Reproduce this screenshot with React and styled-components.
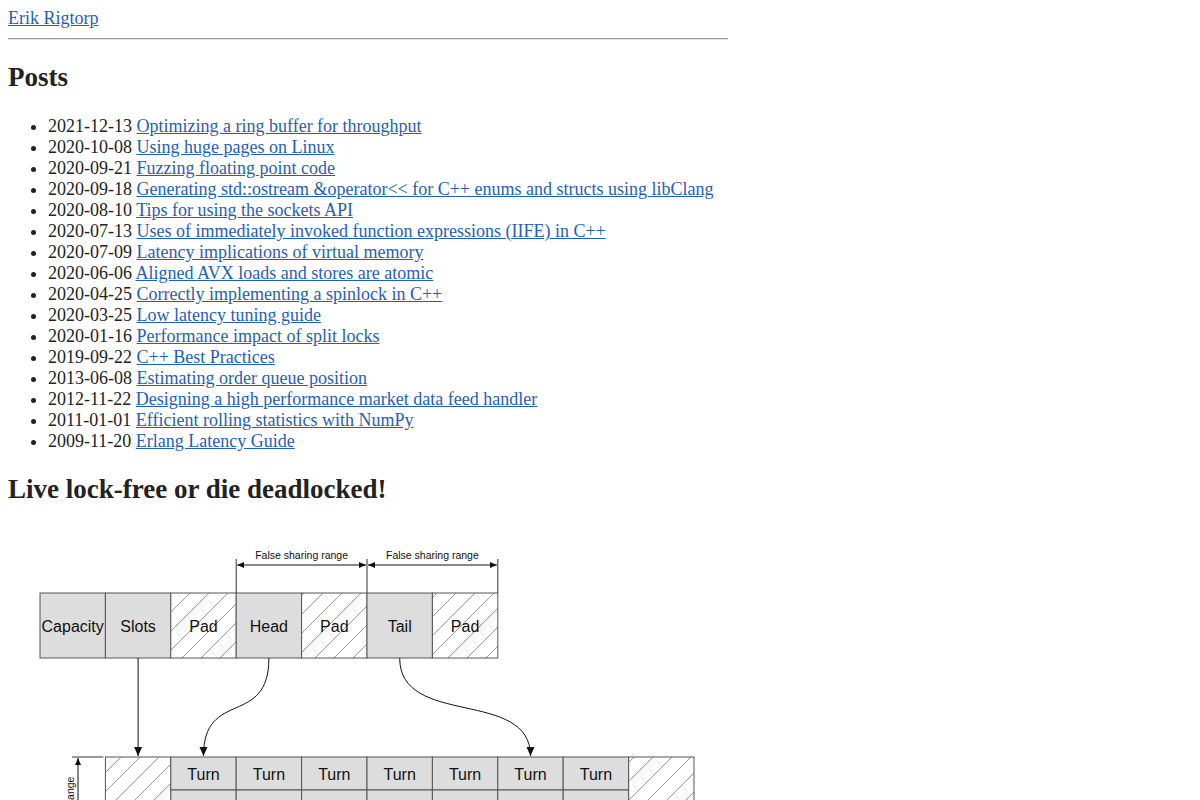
import React from 'react';
import styled, { createGlobalStyle } from 'styled-components';

const GlobalStyle = createGlobalStyle`
  body {
    margin: 8px;
    font-family: "Liberation Serif", "Times New Roman", serif;
    font-size: 18px;
    line-height: 21px;
    color: #222;
    background: #fff;
  }
`;

const Page = styled.div`
  max-width: 720px;
`;

const Link = styled.a`
  color: #1f5fb6;
  text-decoration: underline;
`;

const Rule = styled.hr`
  border: 0;
  border-top: 1px solid #999;
  border-bottom: 1px solid #e4e4e4;
  margin: 9px 0;
`;

const Heading = styled.h2`
  font-size: 27px;
  line-height: 31px;
  font-weight: bold;
  margin: 22.4px 0;
`;

const PostList = styled.ul`
  margin: 18px 0;
  padding-left: 40px;
`;

const Figure = styled.p`
  margin: 18px 0;
`;

const Diagram = styled.svg`
  display: block;
  font-family: "Liberation Sans", Arial, sans-serif;
`;

const posts = [
  ['2021-12-13', 'Optimizing a ring buffer for throughput'],
  ['2020-10-08', 'Using huge pages on Linux'],
  ['2020-09-21', 'Fuzzing floating point code'],
  ['2020-09-18', 'Generating std::ostream &operator<< for C++ enums and structs using libClang'],
  ['2020-08-10', 'Tips for using the sockets API'],
  ['2020-07-13', 'Uses of immediately invoked function expressions (IIFE) in C++'],
  ['2020-07-09', 'Latency implications of virtual memory'],
  ['2020-06-06', 'Aligned AVX loads and stores are atomic'],
  ['2020-04-25', 'Correctly implementing a spinlock in C++'],
  ['2020-03-25', 'Low latency tuning guide'],
  ['2020-01-16', 'Performance impact of split locks'],
  ['2019-09-22', 'C++ Best Practices'],
  ['2013-06-08', 'Estimating order queue position'],
  ['2012-11-22', 'Designing a high performance market data feed handler'],
  ['2011-01-01', 'Efficient rolling statistics with NumPy'],
  ['2009-11-20', 'Erlang Latency Guide'],
];

const W = 65.4;
const X0 = 32;
const cx = (i) => X0 + i * W;

const Cell = ({ i, y, h, label, hatch, size = 16 }) => (
  <g>
    <rect
      x={cx(i)}
      y={y}
      width={W}
      height={h}
      fill={hatch ? 'url(#hatch)' : '#dddddd'}
      stroke="#555"
      strokeWidth="1"
    />
    {label && (
      <text x={cx(i) + W / 2} y={y + h / 2 + size * 0.36 + 1} fontSize={size} textAnchor="middle" fill="#111">
        {label}
      </text>
    )}
  </g>
);

const QueueDiagram = () => {
  const top = ['Capacity', 'Slots', 'Pad', 'Head', 'Pad', 'Tail', 'Pad'];
  const hatched = [false, false, true, false, true, false, true];
  const by = 229;
  return (
    <Diagram width="720" height="420" viewBox="0 0 720 420">
      <defs>
        <pattern id="hatch" width="19" height="19" patternUnits="userSpaceOnUse">
          <rect width="19" height="19" fill="#fff" />
          <path d="M-2 21 L21 -2 M-2 2 L2 -2 M17 21 L21 17" stroke="#9a9a9a" strokeWidth="1" />
        </pattern>
        <marker id="arrow" markerWidth="10" markerHeight="10" refX="9" refY="5" orient="auto" markerUnits="userSpaceOnUse">
          <path d="M0 1 L9 5 L0 9 Z" fill="#111" />
        </marker>
        <marker id="dim" markerWidth="8" markerHeight="8" refX="7" refY="4" orient="auto-start-reverse" markerUnits="userSpaceOnUse">
          <path d="M0 1 L7 4 L0 7 Z" fill="#111" />
        </marker>
      </defs>

      {/* false sharing ranges */}
      {[3, 5, 7].map((i) => (
        <line key={i} x1={cx(i)} y1="31" x2={cx(i)} y2="65" stroke="#333" strokeWidth="1" />
      ))}
      {[3, 5].map((i) => (
        <g key={i}>
          <line x1={cx(i) + 1} y1="37" x2={cx(i + 2) - 1} y2="37" stroke="#111" strokeWidth="1" markerStart="url(#dim)" markerEnd="url(#dim)" />
          <text x={cx(i) + W} y="31" fontSize="10.5" textAnchor="middle" fill="#111">False sharing range</text>
        </g>
      ))}

      {top.map((label, i) => (
        <Cell key={i} i={i} y={65} h={65} label={label} hatch={hatched[i]} />
      ))}

      {/* pointers */}
      <line x1={cx(1) + W / 2} y1="130" x2={cx(1) + W / 2} y2={by - 1} stroke="#111" strokeWidth="1" markerEnd="url(#arrow)" />
      <path
        d={`M${cx(3) + W / 2} 130 C${cx(3) + W / 2} 200 ${cx(2) + W / 2} 160 ${cx(2) + W / 2} ${by - 1}`}
        fill="none"
        stroke="#111"
        strokeWidth="1"
        markerEnd="url(#arrow)"
      />
      <path
        d={`M${cx(5) + W / 2} 130 C${cx(5) + W / 2} 200 ${cx(7) + W / 2} 160 ${cx(7) + W / 2} ${by - 1}`}
        fill="none"
        stroke="#111"
        strokeWidth="1"
        markerEnd="url(#arrow)"
      />

      {/* slots array */}
      <rect x={cx(1)} y={by} width={W} height={132} fill="url(#hatch)" stroke="#555" />
      <rect x={cx(9)} y={by} width={W} height={132} fill="url(#hatch)" stroke="#555" />
      {[2, 3, 4, 5, 6, 7, 8].map((i) => (
        <g key={i}>
          <Cell i={i} y={by} h={33} label="Turn" />
          <Cell i={i} y={by + 33} h={66} label="Value" />
          <Cell i={i} y={by + 99} h={33} label="Pad" hatch />
        </g>
      ))}

      {/* vertical range */}
      <line x1="64" y1={by} x2={cx(1) - 2} y2={by} stroke="#333" strokeWidth="1" />
      <line x1="64" y1={by + 132} x2={cx(1) - 2} y2={by + 132} stroke="#333" strokeWidth="1" />
      <line x1="70" y1={by + 1} x2="70" y2={by + 131} stroke="#111" strokeWidth="1" markerStart="url(#dim)" markerEnd="url(#dim)" />
      <text x="0" y="0" fontSize="10.5" textAnchor="middle" fill="#111" transform={`translate(66 ${by + 66}) rotate(-90)`}>
        False sharing range
      </text>
    </Diagram>
  );
};

const App = () => (
  <Page>
    <GlobalStyle />
    <Link href="#">Erik Rigtorp</Link>
    <Rule />
    <Heading>Posts</Heading>
    <PostList>
      {posts.map(([date, title]) => (
        <li key={date + title}>
          {date} <Link href="#">{title}</Link>
        </li>
      ))}
    </PostList>
    <Heading>Live lock-free or die deadlocked!</Heading>
    <Figure>
      <QueueDiagram />
    </Figure>
  </Page>
);

export default App;
